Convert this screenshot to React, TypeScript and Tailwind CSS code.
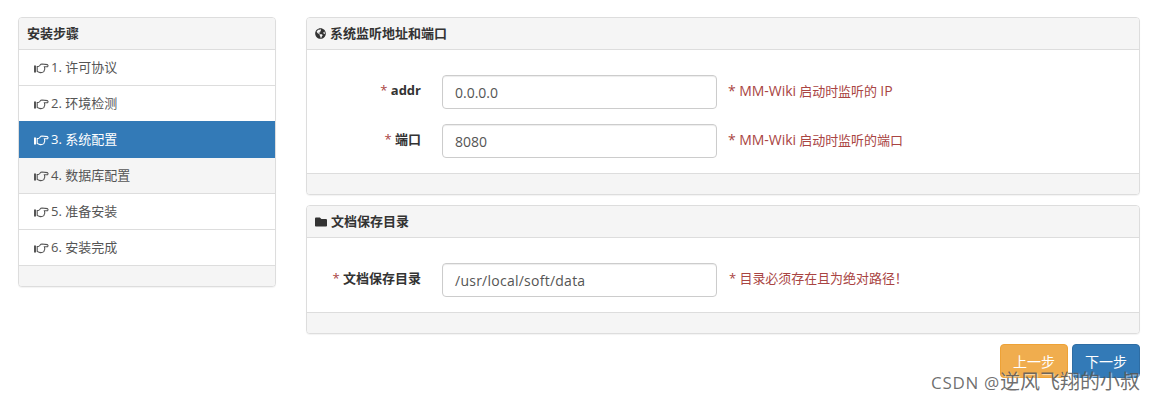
import React from "react";
import { FaGlobeAmericas, FaFolder } from "react-icons/fa";

const font = { fontFamily: '"Open Sans","Noto Sans CJK SC",sans-serif' };

const steps = [
  { t: "1. 许可协议", s: "h-[36px] bg-white text-[#555] border-b border-[#ddd]" },
  { t: "2. 环境检测", s: "h-[35px] bg-white text-[#555]" },
  { t: "3. 系统配置", s: "h-[37px] bg-[#337ab7] text-white" },
  { t: "4. 数据库配置", s: "h-[36px] bg-[#f5f5f5] text-[#555] border-b border-[#ddd]" },
  { t: "5. 准备安装", s: "h-[36px] bg-white text-[#555] border-b border-[#ddd]" },
  { t: "6. 安装完成", s: "h-[36px] bg-white text-[#555] border-b border-[#ddd]" },
];

function HandIcon() {
  return (
    <svg width="15" height="12" viewBox="0 0 15 12" className="shrink-0">
      <rect x="0" y="3.5" width="2" height="7" fill="currentColor" />
      <path
        d="M3.2 4.6 Q5 4.6 6 3.2 Q6.8 2 8 2 L13.4 2.6 Q14.6 3.6 13.6 4.6 L10.4 4.8 Q11.6 7.4 9.8 9.6 Q8 11 5.6 10.4 L3.2 9.4 Z"
        fill="none"
        stroke="currentColor"
        strokeWidth="1.1"
      />
    </svg>
  );
}

function Field({ label, value, help, wide }: { label: string; value: string; help: React.ReactNode; wide?: boolean }) {
  return (
    <div className="flex items-center h-[34px]">
      <label className="w-[114px] text-right text-[13px] font-bold text-[#333] -mt-[3px] shrink-0">
        <span className="text-[#a94442] font-normal">*</span> {label}
      </label>
      <div
        className={`ml-[21px] w-[275px] h-[34px] shrink-0 rounded border border-[#ccc] bg-white px-3 flex items-center text-[14px] text-[#555] shadow-[inset_0_1px_1px_rgba(0,0,0,0.075)] ${wide ? "tracking-[0.25px]" : ""}`}
      >
        {value}
      </div>
      <span className="ml-3 text-[13px] text-[#a94442] -mt-[2px] tracking-[-0.05px]">{help}</span>
    </div>
  );
}

function Panel({ icon, title, children }: { icon: React.ReactNode; title: string; children: React.ReactNode }) {
  return (
    <section className="rounded border border-[#ddd] bg-white shadow-[0_1px_1px_rgba(0,0,0,0.05)] overflow-hidden">
      <header className="h-[32px] bg-[#f5f5f5] border-b border-[#ddd] px-[8px] flex items-center gap-[4px] text-[13px] font-bold text-[#333]">
        {icon}
        <span>{title}</span>
      </header>
      <div className="pt-[25px] pb-[15px] flex flex-col gap-[15px]">{children}</div>
      <div className="h-[21px] bg-[#f5f5f5] border-t border-[#ddd]" />
    </section>
  );
}

export default function App() {
  return (
    <div className="relative w-[1158px] h-[401px] overflow-hidden bg-white" style={font}>
      <div className="flex gap-[30px] pt-[17px] px-[18px]">
        <aside className="w-[258px] shrink-0 self-start rounded border border-[#ddd] bg-white shadow-[0_1px_1px_rgba(0,0,0,0.05)] overflow-hidden">
          <header className="h-[32px] bg-[#f5f5f5] border-b border-[#ddd] pl-[8px] flex items-center text-[13px] font-bold text-[#333]">
            安装步骤
          </header>
          {steps.map((s, i) => (
            <div key={i} className={`pl-[15px] flex items-center gap-[2px] text-[13px] ${s.s}`}>
              <HandIcon />
              <span>{s.t}</span>
            </div>
          ))}
          <div className="h-[20px] bg-[#f5f5f5]" />
        </aside>
        <main className="flex-1 flex flex-col gap-[10px]">
          <Panel icon={<FaGlobeAmericas className="w-[11px] h-[11px]" />} title="系统监听地址和端口">
            <Field label="addr" value="0.0.0.0" help={<><span className="text-[14px] -ml-[1px]">* MM-Wiki</span> 启动时监听的 <span className="text-[14px]">IP</span></>} />
            <Field label="端口" value="8080" help={<><span className="text-[14px] -ml-[1px]">* MM-Wiki</span> 启动时监听的端口</>} />
          </Panel>
          <Panel icon={<FaFolder className="w-[12px] h-[12px]" />} title="文档保存目录">
            <Field label="文档保存目录" value="/usr/local/soft/data" wide help="* 目录必须存在且为绝对路径！" />
          </Panel>
          <div className="flex justify-end gap-[4px]">
            <button className="w-[68px] h-[34px] rounded border border-[#eea236] bg-[#f0ad4e] text-white text-[14px]">上一步</button>
            <button className="w-[68px] h-[34px] rounded border border-[#2e6da4] bg-[#337ab7] text-white text-[14px]">下一步</button>
          </div>
        </main>
      </div>
      <div className="absolute left-[931px] top-[369px] leading-[26px] whitespace-nowrap text-[rgba(85,85,85,0.85)] [text-shadow:1px_1px_1px_rgba(255,255,255,0.6)]">
        <span className="text-[17px] tracking-[0.7px]">CSDN @</span>
        <span className="text-[20px]">逆风飞翔的小叔</span>
      </div>
    </div>
  );
}
